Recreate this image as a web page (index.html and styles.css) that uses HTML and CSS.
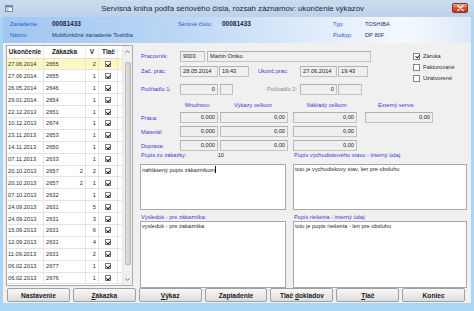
FILE: index.html
```html
<!DOCTYPE html>
<html lang="sk">
<head>
<meta charset="utf-8">
<title>Servisná kniha</title>
<link rel="stylesheet" href="styles.css">
</head>
<body>
<div class="win">
  <div class="titlebar">
    <span class="appicon"><svg width="8" height="7" viewBox="0 0 8 7"><rect x="0.5" y="0.5" width="7" height="6" fill="#f4f6f8" stroke="#7b8794"/><rect x="1" y="1" width="6" height="1.5" fill="#6d8fb3"/><rect x="1.5" y="3.5" width="2" height="2" fill="#9aa7b4"/></svg></span>
    <span class="title">Servisná kniha podľa sériového čísla, rozsah záznamov: ukončenie výkazov</span>
    <span class="close"><svg width="7" height="6" viewBox="0 0 7 6"><path d="M1 0.8 L6 5.2 M6 0.8 L1 5.2" stroke="#fff" stroke-width="1.4" stroke-linecap="round"/></svg></span>
  </div>
  <div class="client">
    <div class="header">
      <div class="hrow">
        <span class="hl w42">Zariadenie:</span><span class="hv b w126">00081433</span>
        <span class="hl w44">Sériové číslo:</span><span class="hv b w111">00081433</span>
        <span class="hl w32">Typ:</span><span class="hv t">TOSHIBA</span>
      </div>
      <div class="hrow">
        <span class="hl w42">Názov:</span><span class="hv w126">Multifunkčné zariadenie Toshiba</span>
        <span class="w155"></span>
        <span class="hl w32">Podtyp:</span><span class="hv t">DP 80F</span>
      </div>
    </div>
    <div class="main">
      <div class="list">
        <div class="rows">
          <div class="lhead"><span class="c1 hc">Ukončenie</span><span class="c2 hc">Zákazka</span><span class="c3 hc">V</span><span class="c4 hc">Tlač</span><span class="c5"></span></div>
          <div class="lrow sel"><span class="c1">27.06.2014</span><span class="c2"><span>2655</span><span></span></span><span class="c3">2</span><span class="c4"><i class="cb on"></i></span><span class="c5"></span></div>
          <div class="lrow"><span class="c1">27.06.2014</span><span class="c2"><span>2655</span><span></span></span><span class="c3">1</span><span class="c4"><i class="cb on"></i></span><span class="c5"></span></div>
          <div class="lrow"><span class="c1">26.05.2014</span><span class="c2"><span>2646</span><span></span></span><span class="c3">1</span><span class="c4"><i class="cb on"></i></span><span class="c5"></span></div>
          <div class="lrow"><span class="c1">29.01.2014</span><span class="c2"><span>2654</span><span></span></span><span class="c3">1</span><span class="c4"><i class="cb on"></i></span><span class="c5"></span></div>
          <div class="lrow"><span class="c1">22.12.2013</span><span class="c2"><span>2651</span><span></span></span><span class="c3">1</span><span class="c4"><i class="cb on"></i></span><span class="c5"></span></div>
          <div class="lrow"><span class="c1">10.12.2013</span><span class="c2"><span>2674</span><span></span></span><span class="c3">1</span><span class="c4"><i class="cb on"></i></span><span class="c5"></span></div>
          <div class="lrow"><span class="c1">23.11.2013</span><span class="c2"><span>2653</span><span></span></span><span class="c3">1</span><span class="c4"><i class="cb on"></i></span><span class="c5"></span></div>
          <div class="lrow"><span class="c1">14.11.2013</span><span class="c2"><span>2650</span><span></span></span><span class="c3">1</span><span class="c4"><i class="cb on"></i></span><span class="c5"></span></div>
          <div class="lrow"><span class="c1">07.11.2013</span><span class="c2"><span>2633</span><span></span></span><span class="c3">1</span><span class="c4"><i class="cb on"></i></span><span class="c5"></span></div>
          <div class="lrow"><span class="c1">20.10.2013</span><span class="c2"><span>2657</span><span>2</span></span><span class="c3">2</span><span class="c4"><i class="cb on"></i></span><span class="c5"></span></div>
          <div class="lrow"><span class="c1">20.10.2013</span><span class="c2"><span>2657</span><span>2</span></span><span class="c3">1</span><span class="c4"><i class="cb on"></i></span><span class="c5"></span></div>
          <div class="lrow"><span class="c1">07.10.2013</span><span class="c2"><span>2632</span><span></span></span><span class="c3">1</span><span class="c4"><i class="cb on"></i></span><span class="c5"></span></div>
          <div class="lrow"><span class="c1">24.09.2013</span><span class="c2"><span>2631</span><span></span></span><span class="c3">5</span><span class="c4"><i class="cb on"></i></span><span class="c5"></span></div>
          <div class="lrow"><span class="c1">24.09.2013</span><span class="c2"><span>2631</span><span></span></span><span class="c3">3</span><span class="c4"><i class="cb on"></i></span><span class="c5"></span></div>
          <div class="lrow"><span class="c1">15.09.2013</span><span class="c2"><span>2631</span><span></span></span><span class="c3">6</span><span class="c4"><i class="cb on"></i></span><span class="c5"></span></div>
          <div class="lrow"><span class="c1">12.09.2013</span><span class="c2"><span>2631</span><span></span></span><span class="c3">4</span><span class="c4"><i class="cb on"></i></span><span class="c5"></span></div>
          <div class="lrow"><span class="c1">11.09.2013</span><span class="c2"><span>2631</span><span></span></span><span class="c3">2</span><span class="c4"><i class="cb on"></i></span><span class="c5"></span></div>
          <div class="lrow"><span class="c1">06.02.2013</span><span class="c2"><span>2677</span><span></span></span><span class="c3">1</span><span class="c4"><i class="cb on"></i></span><span class="c5"></span></div>
          <div class="lrow"><span class="c1">06.02.2013</span><span class="c2"><span>2676</span><span></span></span><span class="c3">1</span><span class="c4"><i class="cb on"></i></span><span class="c5"></span></div>
        </div>
        <div class="scroll">
          <div class="arrow"><svg width="5" height="3" viewBox="0 0 5 3"><path d="M0.5 2.6 L2.5 0.6 L4.5 2.6" fill="none" stroke="#606060" stroke-width="0.9"/></svg></div>
          <div class="track"><div class="thumb"></div></div>
          <div class="arrow"><svg width="5" height="3" viewBox="0 0 5 3"><path d="M0.5 0.4 L2.5 2.4 L4.5 0.4" fill="none" stroke="#606060" stroke-width="0.9"/></svg></div>
        </div>
      </div>
      <div class="form">
        <div class="top">
          <div class="fields">
            <div class="frow r1">
              <span class="lab">Pracovník:</span>
              <span class="in w25">9003</span>
              <span class="in w164 ml2">Martin Ontko</span>
            </div>
            <div class="frow r2">
              <span class="lab">Zač. prác:</span>
              <span class="in w38">28.05.2014</span>
              <span class="in w30 ml1">19:43</span>
              <span class="lab lab2">Ukonč.prác:</span>
              <span class="in w37">27.06.2014</span>
              <span class="in w30 ml1">19:43</span>
            </div>
            <div class="frow r3">
              <span class="lab">Počítadlo 1:</span>
              <span class="in w38 ra">0</span>
              <span class="in w13 ml2"></span>
              <span class="lab lab3">Počítadlo 2:</span>
              <span class="in w37 ra">0</span>
              <span class="in w24 ml1"></span>
            </div>
          </div>
          <div class="checks">
            <div class="chk"><i class="cb big on"></i><span>Záruka</span></div>
            <div class="chk"><i class="cb big"></i><span>Fakturované</span></div>
            <div class="chk"><i class="cb big"></i><span>Uzatvorené</span></div>
          </div>
        </div>
        <div class="ghead">
          <span class="gh g1">Množstvo</span>
          <span class="gh g2">Výkazy celkom</span>
          <span class="gh g3">Náklady celkom</span>
          <span class="gh g4">Externý servis</span>
        </div>
        <div class="frow grow">
          <span class="lab">Práca:</span>
          <span class="in w38 ra">0,000</span>
          <span class="in w68 ml2 ra">0,00</span>
          <span class="in w64 ml5 ra">0,00</span>
          <span class="in w68 ml8 ra">0,00</span>
        </div>
        <div class="frow grow">
          <span class="lab">Materiál:</span>
          <span class="in w38 ra">0,000</span>
          <span class="in w68 ml2 ra">0,00</span>
          <span class="in w64 ml5 ra">0,00</span>
        </div>
        <div class="frow grow">
          <span class="lab">Doprava:</span>
          <span class="in w38 ra">0,000</span>
          <span class="in w68 ml2 ra">0,00</span>
          <span class="in w64 ml5 ra">0,00</span>
        </div>
        <div class="memos">
          <div class="mlab"><span>Popis zo zákazky:</span><span class="cnt">10</span></div>
          <div class="mlab"><span>Popis východiskového stavu - interný údaj:</span></div>
          <div class="memo m1">nahlásený popis zákazníkom<span class="caret"></span></div>
          <div class="memo m1">toto je vychodiskovy stav, len pre obsluhu</div>
          <div class="mlab ml-b"><span>Výsledok - pre zákazníka:</span></div>
          <div class="mlab ml-b"><span>Popis riešenia - interný údaj:</span></div>
          <div class="memo m2">vysledok - pre zakaznika</div>
          <div class="memo m2">toto je popis riešenia - len pre obsluhu</div>
        </div>
      </div>
    </div>
    <div class="buttons">
      <span class="btn"><span>Nastavenie</span></span>
      <span class="btn"><span><u>Z</u>ákazka</span></span>
      <span class="btn"><span><u>V</u>ýkaz</span></span>
      <span class="btn"><span>Zapiadenie</span></span>
      <span class="btn"><span>Tlač <u>d</u>okladov</span></span>
      <span class="btn"><span><u>T</u>lač</span></span>
      <span class="btn"><span>Koniec</span></span>
    </div>
  </div>
</div>
</body>
</html>
```

FILE: styles.css
```css
* { box-sizing: border-box; }
html, body { margin: 0; padding: 0; }
body {
  width: 474px; height: 311px; overflow: hidden;
  background: #abd5f4;
  font-family: "Liberation Sans", Arial, sans-serif;
  font-size: 5.7px; color: #2e2e2e;
}
.win { width: 474px; height: 311px; display: flex; flex-direction: column; }

.titlebar {
  height: 17px; flex: none; display: flex; align-items: flex-start;
  background: linear-gradient(#cadced, #bcd2ea);
}
.appicon { margin: 5px 0 0 5px; width: 8px; height: 7px; display: flex; }
.title { flex: 1; text-align: center; font-size: 7.8px; line-height: 17px; color: #1e2836; white-space: nowrap; }
.close {
  margin: 3px 6px 0 0; width: 16px; height: 10px;
  border: 1px solid #8e3326; border-radius: 2px;
  background: linear-gradient(#eaa594, #d54b34 55%, #c43a22);
  display: flex; align-items: center; justify-content: center;
}

.client {
  flex: 1; margin: 0 3px 8px; background: #f0f0f0;
  display: flex; flex-direction: column;
}

.header {
  height: 26px; flex: none; padding: 1px 0 0 7px;
  background: linear-gradient(to right, #a1c7f0 0%, #b8d5f4 35%, #e2edfa 68%, #f5f9fd 86%, #dde9f8 100%);
}
.hrow { display: flex; height: 11px; align-items: center; white-space: nowrap; }
.hl { color: #2c58d4; }
.hv { color: #26346a; }
.b { font-weight: bold; font-size: 6.5px; color: #1c2652; }
.t { color: #24307a; }
.w42 { width: 42px; } .w126 { width: 126px; } .w44 { width: 44px; }
.w111 { width: 111px; } .w32 { width: 32px; } .w155 { width: 155px; }

.main { height: 243px; flex: none; display: flex; padding-top: 2px; }

.list {
  margin-left: 3px; width: 127px; height: 241px;
  border: 1px solid #aaaaaa; background: #fff; display: flex;
}
.rows { flex: 1; }
.lhead, .lrow { display: grid; grid-template-columns: 37px 42px 13px 19px 4px; }
.lhead { height: 12.5px; }
.lrow { height: 11.9px; }
.lhead > span, .lrow > span {
  display: flex; align-items: center;
  border-right: 1px solid #e4e4e4; border-bottom: 1px solid #e4e4e4;
  white-space: nowrap; overflow: hidden;
}
.lhead > span { border-right-color: #ececec; border-bottom-color: #e0e0e0; }
.hc { font-weight: bold; font-size: 6.4px; color: #222; justify-content: center; }
.lrow .c1 { padding-left: 1px; }
.lrow .c2 { justify-content: space-between; padding: 0 2px 0 2px; }
.lrow .c3 { justify-content: flex-end; padding-right: 2px; }
.c4 { justify-content: center; }
.lhead .c4 { justify-content: flex-start; padding-left: 3px; }
.c5 { border-right: none !important; }
.sel > span { background: #fbf8c2; }

.cb {
  display: block; width: 6px; height: 6px; position: relative;
  border: 1px solid #7d7d7d; background: #fff;
}
.cb.on::after {
  content: ""; position: absolute; left: 1.2px; top: 0px;
  width: 1.6px; height: 3px;
  border-right: 1.1px solid #1c1c1c; border-bottom: 1.1px solid #1c1c1c;
  transform: rotate(40deg);
}
.cb.big { width: 7px; height: 7px; border-color: #858585; }
.cb.big.on::after { left: 1.6px; top: 0.2px; width: 1.8px; height: 3.4px; }

.scroll {
  width: 10px; display: flex; flex-direction: column;
  background: #f0f0f0; border-left: 1px solid #e6e6e6;
}
.arrow { height: 11px; display: flex; align-items: center; justify-content: center; }
.track { flex: 1; padding: 5px 1.5px 9px; }
.thumb {
  height: 100%; border: 1px solid #b9b9b9; border-radius: 1px;
  background: linear-gradient(to right, #dedede, #d2d2d2);
}

.form { flex: 1; margin-left: 4px; padding: 5.5px 4px 0 3px; }
.top { display: flex; }
.fields { width: 231px; }
.checks { margin-left: auto; width: 54px; }
.chk { height: 11px; display: flex; align-items: center; gap: 3px; color: #2e2e2e; }

.frow { display: flex; height: 11px; align-items: center; white-space: nowrap; }
.r2 { margin-top: 4px; }
.r3 { margin-top: 7px; }
.lab { width: 40px; padding-left: 1px; color: #3b3bd6; }
.lab2 { width: 42px; margin-left: 9px; padding-left: 0; }
.lab3 { width: 67px; text-align: right; padding-right: 3px; color: #8a8a8a; }
.in {
  height: 11px; line-height: 9px; padding: 0 2px;
  border: 1px solid #c2c2c2; border-top-color: #b0b0b0; border-left-color: #b8b8b8;
  background: #efefef; color: #262626; overflow: hidden;
}
.ra { text-align: right; }
.w25 { width: 25px; } .w164 { width: 164px; } .w38 { width: 38px; } .w30 { width: 30px; }
.w37 { width: 37px; } .w13 { width: 13px; } .w24 { width: 24px; } .w68 { width: 68px; } .w64 { width: 64px; }
.ml1 { margin-left: 1px; } .ml2 { margin-left: 2px; } .ml5 { margin-left: 5px; } .ml8 { margin-left: 8px; }

.ghead { display: flex; height: 8px; margin-top: 6.5px; align-items: center; white-space: nowrap; color: #3b3bd6; }
.gh { display: block; }
.g1 { margin-left: 45px; width: 49px; }
.g2 { width: 72.5px; }
.g3 { width: 71.5px; }
.grow { margin-top: 3px; }
.grow + .grow { margin-top: 3.2px; }

.memos { display: grid; grid-template-columns: 146px 174px; column-gap: 7px; }
.mlab { height: 8px; display: flex; align-items: center; color: #3b3bd6; white-space: nowrap; padding-left: 1px; }
.cnt { margin-left: auto; margin-right: 62px; color: #2e2e2e; }
.memo { background: #fff; border: 1px solid #a8a8a8; padding: 1.5px 1px; color: #2a2a2a; line-height: 7px; white-space: nowrap; }
.m1 { height: 46px; margin-top: 4.5px; }
.ml-b { margin-top: 3px; }
.m2 { height: 67px; }
.caret { display: inline-block; width: 0.8px; height: 6.5px; background: #111; vertical-align: -1px; margin-left: 0.3px; }

.buttons { display: flex; gap: 3px; padding: 0 6px 0 4px; margin-top: 2px; height: 14px; flex: none; }
.btn {
  flex: 1; border: 1px solid #a0a0a0; border-radius: 2px;
  background: linear-gradient(#f7f7f7, #ebebeb 50%, #dcdcdc);
  font-weight: bold; font-size: 6.6px; color: #1c1c1c;
  display: flex; align-items: center; justify-content: center; white-space: nowrap;
}
.btn u { text-underline-offset: 0.8px; }
```
